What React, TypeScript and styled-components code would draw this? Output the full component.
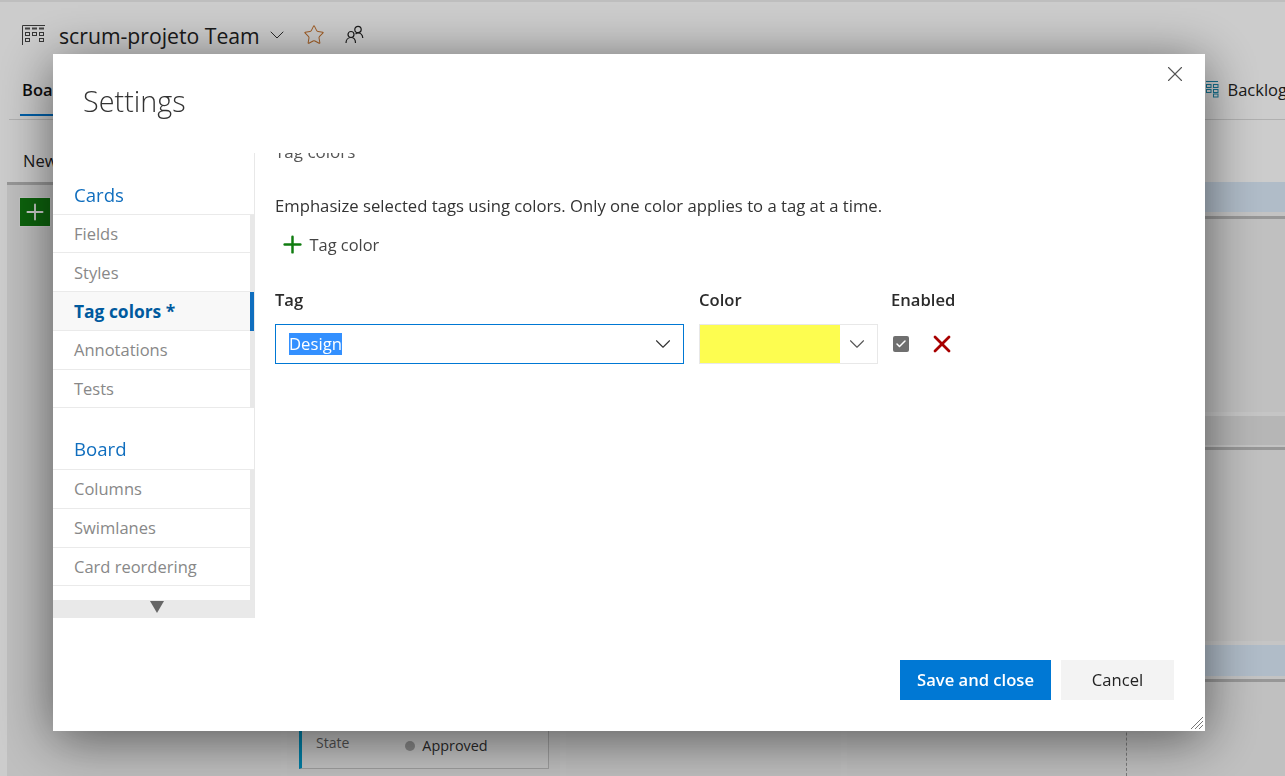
import React from 'react';
import styled, { createGlobalStyle } from 'styled-components';
import { ChevronDown, Star, X, Plus, Check } from 'lucide-react';

const GlobalStyle = createGlobalStyle`
  html, body {
    margin: 0;
    padding: 0;
    height: 100%;
    overflow: hidden;
    background: #fff;
    font-family: "Open Sans", "Liberation Sans", sans-serif;
    color: #2b2b2b;
  }
  * { box-sizing: border-box; }
`;

const Page = styled.div`
  width: 1285px;
  height: 776px;
  overflow: hidden;
  border-top: 2px solid #eeeeee;
  display: flex;
  flex-direction: column;
  background: #fff;
`;

const TeamHeader = styled.header`
  height: 66px;
  padding: 0 0 0 22px;
  display: flex;
  align-items: center;
  flex-shrink: 0;
`;

const TeamName = styled.h1`
  margin: 0 5px 0 14px;
  font-size: 21.2px;
  font-weight: 400;
  color: #222;
`;

const HeaderIcon = styled.span<{ $gap?: number }>`
  display: flex;
  margin-left: ${({ $gap }) => $gap ?? 0}px;
`;

const TabBar = styled.nav`
  height: 52px;
  margin-left: 9px;
  padding: 0 0 0 11px;
  border-bottom: 1px solid #dcdcdc;
  display: flex;
  justify-content: space-between;
  flex-shrink: 0;
`;

const ActiveTab = styled.div`
  height: 48px;
  width: 60px;
  padding: 10px 0 0 2px;
  border-bottom: 2px solid #0078d4;
  font-size: 16.5px;
  font-weight: 600;
  color: #111;
`;

const BacklogLink = styled.div`
  display: flex;
  align-items: center;
  gap: 9px;
  height: 42px;
  margin-right: -2px;
  font-size: 16.5px;
  color: #222;
`;

const Toolbar = styled.div`
  height: 62px;
  padding: 29px 0 0 23px;
  font-size: 16.5px;
  color: #222;
  flex-shrink: 0;
`;

const Board = styled.div`
  flex: 1;
  margin-left: 7px;
  display: flex;
  min-height: 0;
`;

const NewColumn = styled.div`
  width: 274px;
  background: #efefef;
  border-top: 3px solid #bdbdbd;
  padding: 13px 0 0 13px;
  flex-shrink: 0;
`;

const AddCard = styled.div`
  width: 30px;
  height: 28px;
  background: #107c10;
  box-shadow: 0 0 0 1px #f6f6f6;
  display: flex;
  align-items: center;
  justify-content: center;
  color: #fff;
  svg { flex-shrink: 0; }
`;

const Lanes = styled.div`
  flex: 1;
  display: flex;
  flex-direction: column;
  min-width: 0;
`;

const LaneHeader = styled.div<{ $tint: string; $height: number }>`
  height: ${({ $height }) => $height}px;
  background: ${({ $tint }) => $tint};
  flex-shrink: 0;
`;

const LaneRule = styled.div<{ $height: number }>`
  height: ${({ $height }) => $height}px;
  background: #f4f4f4;
  border-bottom: 3px solid #bdbdbd;
  flex-shrink: 0;
`;

const LaneBody = styled.div<{ $height?: number }>`
  height: ${({ $height }) => ($height ? `${$height}px` : 'auto')};
  flex: ${({ $height }) => ($height ? '0 0 auto' : '1')};
  background: #f0f0f0;
  border-bottom: ${({ $height }) => ($height ? '4px solid #f7f7f7' : '0')};
  display: flex;
  padding-left: 6px;
  gap: 6px;
`;

const BoardColumn = styled.div<{ $width: number; $dashed?: boolean }>`
  width: ${({ $width }) => $width}px;
  background: #eeeeee;
  border-right: ${({ $dashed }) => ($dashed ? '1px dashed #999' : '0')};
  padding: 0 0 0 12px;
`;

const WorkCard = styled.div`
  margin-top: 42px;
  width: 250px;
  height: 45px;
  background: #f2f2f2;
  border: 1px solid #c4c4c4;
  border-left: 3px solid #009ccc;
  padding: 8px 0 0 14px;
  display: flex;
  align-items: flex-start;
  font-size: 14px;
  color: #666;
`;

const StateValue = styled.div`
  margin: 3px 0 0 56px;
  display: flex;
  align-items: center;
  gap: 7px;
  font-size: 14.4px;
  color: #333;
`;

const StateDot = styled.span`
  width: 10px;
  height: 10px;
  border-radius: 50%;
  background: #aaa;
`;

const Scrim = styled.div`
  position: fixed;
  inset: 0;
  background: rgba(0, 0, 0, 0.2);
`;

const Dialog = styled.div`
  position: fixed;
  left: 53px;
  top: 54px;
  width: 1152px;
  height: 677px;
  background: #fff;
  box-shadow: 0 8px 50px rgba(0, 0, 0, 0.55);
  display: flex;
  flex-direction: column;
`;

const DialogTitle = styled.h2`
  margin: 0;
  height: 99px;
  padding: 27px 0 0 30px;
  font-size: 28.8px;
  font-weight: 300;
  color: #333;
  flex-shrink: 0;
`;

const CloseButton = styled.button`
  position: absolute;
  top: 7px;
  right: 17px;
  width: 26px;
  height: 26px;
  padding: 0;
  border: 0;
  background: none;
  color: #555;
  display: flex;
`;

const DialogBody = styled.div`
  flex: 1;
  display: flex;
  min-height: 0;
`;

const SideNav = styled.div`
  width: 202px;
  height: 465px;
  border-right: 1px solid #e8e8e8;
  display: flex;
  flex-direction: column;
  flex-shrink: 0;
  overflow: hidden;
`;

const NavScroll = styled.div`
  flex: 1;
  min-height: 0;
  overflow: hidden;
`;

const NavGroupTitle = styled.div<{ $first?: boolean }>`
  height: ${({ $first }) => ($first ? 61.5 : 61.5)}px;
  padding: ${({ $first }) => ($first ? 29 : 28)}px 0 0 21px;
  font-size: 18.6px;
  color: #106ebe;
  border-bottom: 1px solid #eaeaea;
`;

const NavGroup = styled.ul`
  margin: 0;
  padding: 0;
  list-style: none;
  border-right: 4px solid #e8e8e8;
  position: relative;
`;

const NavItem = styled.li<{ $active?: boolean }>`
  height: 38.8px;
  padding: 7.4px 0 0 21px;
  font-size: ${({ $active }) => ($active ? 17.4 : 16.5)}px;
  font-weight: ${({ $active }) => ($active ? 700 : 400)};
  color: ${({ $active }) => ($active ? '#005a9e' : '#888')};
  background: ${({ $active }) => ($active ? '#f8f8f8' : '#fff')};
  border-bottom: 1px solid #eaeaea;
  position: relative;
  white-space: nowrap;
  &::after {
    content: '';
    display: ${({ $active }) => ($active ? 'block' : 'none')};
    position: absolute;
    top: 0;
    bottom: -1px;
    right: -4px;
    width: 4px;
    background: #106ebe;
  }
`;

const ScrollDown = styled.div`
  height: 18px;
  padding-left: 7px;
  background: #e9e9e9;
  display: flex;
  align-items: flex-start;
  justify-content: center;
  flex-shrink: 0;
`;

const Content = styled.div`
  flex: 1;
  height: 465px;
  overflow: hidden;
  padding-left: 20px;
`;

const SectionTitle = styled.h3`
  margin: -13px 0 0;
  height: 54px;
  font-size: 17px;
  font-weight: 400;
  color: #555;
`;

const Description = styled.p`
  margin: 0;
  height: 24px;
  font-size: 16.68px;
  line-height: 24px;
  color: #333;
  white-space: nowrap;
`;

const AddTagColor = styled.div`
  margin: 14px 0 0 4px;
  display: flex;
  align-items: center;
  gap: 3.5px;
  height: 24px;
  font-size: 16.4px;
  color: #444;
  svg { flex-shrink: 0; }
`;

const TagGrid = styled.div`
  margin-top: 32px;
  display: grid;
  grid-template-columns: 409px 179px auto;
  column-gap: 15px;
  row-gap: 12px;
  justify-content: start;
`;

const ColumnLabel = styled.div<{ $shift?: number }>`
  height: 24px;
  margin-left: ${({ $shift }) => $shift ?? 0}px;
  font-size: 16.6px;
  font-weight: 600;
  line-height: 24px;
  color: #2b2b2b;
`;

const TagSelect = styled.div`
  height: 40px;
  border: 1px solid #0078d4;
  display: flex;
  align-items: center;
  justify-content: space-between;
  padding: 0 7px 0 13px;
  color: #333;
`;

const SelectedText = styled.span`
  display: block;
  height: 22px;
  line-height: 22px;
  font-size: 16.7px;
  color: #fff;
  background: #3390ff;
`;

const ColorSelect = styled.div`
  height: 40px;
  border: 1px solid #e8e8e8;
  display: flex;
  align-items: center;
  color: #555;
`;

const ColorSwatch = styled.div<{ $color: string }>`
  width: 140px;
  height: 38px;
  background: ${({ $color }) => $color};
  margin-right: 4px;
`;

const RowActions = styled.div`
  display: flex;
  align-items: center;
  gap: 19px;
  svg { flex-shrink: 0; }
`;

const CheckBox = styled.span`
  width: 16px;
  height: 16px;
  border-radius: 2px;
  background: #6f6f6f;
  color: #fff;
  display: flex;
  align-items: center;
  justify-content: center;
`;

const DeleteIcon = styled.span`
  display: flex;
  color: #a80000;
`;

const Footer = styled.footer`
  height: 113px;
  padding: 42px 31px 0 0;
  display: flex;
  justify-content: flex-end;
  gap: 10px;
  flex-shrink: 0;
`;

const FooterButton = styled.button<{ $primary?: boolean }>`
  height: 40px;
  width: ${({ $primary }) => ($primary ? 151 : 113)}px;
  border: 0;
  padding: 0 0 2px;
  font-family: inherit;
  font-size: 16.6px;
  font-weight: ${({ $primary }) => ($primary ? 600 : 400)};
  color: ${({ $primary }) => ($primary ? '#fff' : '#222')};
  background: ${({ $primary }) => ($primary ? '#0078d4' : '#f3f3f3')};
`;

const ResizeGrip = styled.svg`
  position: absolute;
  right: 2px;
  bottom: 2px;
`;

const BoardIcon = () => (
  <svg width="23" height="20" viewBox="0 0 23 20" fill="none" stroke="#444" strokeWidth="1">
    <path d="M0.500 20V0.500H23" />
    <path d="M3 3.500h5M10 3.500h5M17 3.500h5" strokeWidth="2" stroke="#555" />
    <rect x="3.500" y="7.500" width="4" height="3" />
    <rect x="10.500" y="7.500" width="4" height="3" />
    <rect x="17.500" y="7.500" width="4" height="3" />
    <rect x="3.500" y="13.500" width="4" height="3" />
    <rect x="17.500" y="13.500" width="4" height="3" />
  </svg>
);

const BacklogIcon = () => (
  <svg width="13" height="17" viewBox="0 0 13 17" fill="none" stroke="#1b8db3" strokeWidth="1">
    <path d="M0 0.500H12" />
    <rect x="0.500" y="3.500" width="4.500" height="3" />
    <rect x="7.500" y="3.500" width="4.500" height="3" />
    <rect x="0.500" y="8.500" width="4.500" height="3" />
    <rect x="7.500" y="8.500" width="4.500" height="3" />
    <rect x="7.500" y="13" width="4.500" height="3" />
  </svg>
);

const PeopleIcon = () => (
  <svg width="19" height="20" viewBox="0 0 19 20" fill="none" stroke="#222" strokeWidth="1.2">
    <circle cx="13" cy="4.500" r="3.200" />
    <circle cx="6" cy="9.500" r="3" />
    <path d="M1 18c0-3 2-5.500 5-5.500s4.500 2.500 4.500 5.500" />
    <path d="M10.500 9c1-.8 1.800-1 2.500-1 2.500 0 4.500 2 4.800 5" />
  </svg>
);

const cardsItems = ['Fields', 'Styles', 'Tag colors *', 'Annotations', 'Tests'];
const boardItems = ['Columns', 'Swimlanes', 'Card reordering', 'Status badge'];

export default function App() {
  return (
    <>
      <GlobalStyle />
      <Page>
        <TeamHeader>
          <BoardIcon />
          <TeamName>scrum-projeto Team</TeamName>
          <ChevronDown size={24} strokeWidth={1} color="#333" />
          <HeaderIcon $gap={14}>
            <Star size={22} strokeWidth={1.1} color="#c8742e" />
          </HeaderIcon>
          <HeaderIcon $gap={20}>
            <PeopleIcon />
          </HeaderIcon>
        </TeamHeader>
        <TabBar>
          <ActiveTab>Boards</ActiveTab>
          <BacklogLink>
            <BacklogIcon />
            Backlog
          </BacklogLink>
        </TabBar>
        <Toolbar>New</Toolbar>
        <Board>
          <NewColumn>
            <AddCard>
              <Plus size={26} strokeWidth={1.7} />
            </AddCard>
          </NewColumn>
          <Lanes>
            <LaneHeader $tint="#dcebfa" $height={30} />
            <LaneRule $height={7} />
            <LaneBody $height={197} />
            <LaneHeader $tint="#e4e4e4" $height={29} />
            <LaneRule $height={5} />
            <LaneBody $height={195} />
            <LaneHeader $tint="#dcebfa" $height={31} />
            <LaneRule $height={6} />
            <LaneBody>
              <BoardColumn $width={273}>
                <WorkCard>
                  State
                  <StateValue>
                    <StateDot />
                    Approved
                  </StateValue>
                </WorkCard>
              </BoardColumn>
              <BoardColumn $width={275} />
              <BoardColumn $width={280} $dashed />
            </LaneBody>
          </Lanes>
        </Board>
      </Page>
      <Scrim />
      <Dialog>
        <DialogTitle>Settings</DialogTitle>
        <CloseButton aria-label="Close">
          <X size={26} strokeWidth={1} />
        </CloseButton>
        <DialogBody>
          <SideNav>
            <NavScroll>
              <NavGroupTitle $first>Cards</NavGroupTitle>
              <NavGroup>
                {cardsItems.map((item) => (
                  <NavItem key={item} $active={item === 'Tag colors *'}>
                    {item}
                  </NavItem>
                ))}
              </NavGroup>
              <NavGroupTitle>Board</NavGroupTitle>
              <NavGroup>
                {boardItems.map((item) => (
                  <NavItem key={item}>{item}</NavItem>
                ))}
              </NavGroup>
            </NavScroll>
            <ScrollDown>
              <svg width="14" height="13" viewBox="0 0 14 13">
                <path d="M0 1h14L7 13z" fill="#666" />
              </svg>
            </ScrollDown>
          </SideNav>
          <Content>
            <SectionTitle>Tag colors</SectionTitle>
            <Description>
              Emphasize selected tags using colors. Only one color applies to a tag at a time.
            </Description>
            <AddTagColor>
              <Plus size={27} strokeWidth={2.2} color="#107c10" />
              Tag color
            </AddTagColor>
            <TagGrid>
              <ColumnLabel>Tag</ColumnLabel>
              <ColumnLabel>Color</ColumnLabel>
              <ColumnLabel $shift={-2}>Enabled</ColumnLabel>
              <TagSelect>
                <SelectedText>Design</SelectedText>
                <ChevronDown size={26} strokeWidth={1} />
              </TagSelect>
              <ColorSelect>
                <ColorSwatch $color="#fdfd50" />
                <ChevronDown size={26} strokeWidth={1} />
              </ColorSelect>
              <RowActions>
                <CheckBox>
                  <Check size={12} strokeWidth={3} />
                </CheckBox>
                <DeleteIcon>
                  <X size={28} strokeWidth={2.4} />
                </DeleteIcon>
              </RowActions>
            </TagGrid>
          </Content>
        </DialogBody>
        <Footer>
          <FooterButton $primary>Save and close</FooterButton>
          <FooterButton>Cancel</FooterButton>
        </Footer>
        <ResizeGrip width="12" height="12" viewBox="0 0 12 12" stroke="#777" strokeWidth="1">
          <path d="M0 12L12 0M4 12L12 4M8 12L12 8" />
        </ResizeGrip>
      </Dialog>
    </>
  );
}
